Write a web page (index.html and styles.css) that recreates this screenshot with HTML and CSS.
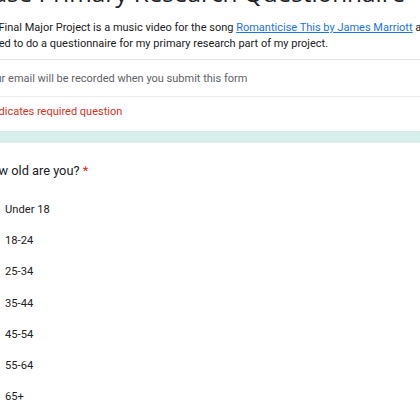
FILE: index.html
```html
<!DOCTYPE html>
<html lang="en">
<head>
<meta charset="utf-8">
<title>Primary Research Questionnaire</title>
<link rel="stylesheet" href="styles.css">
</head>
<body>
<div class="form">
  <section class="card header-card">
    <h1 class="title">Phase Primary Research Questionnaire</h1>
    <p class="desc">My Final Major Project is a music video for the song <a href="#">Romanticise This by James Marriott</a> and<br>I need to do a questionnaire for my primary research part of my project.</p>
    <div class="row email">Your email will be recorded when you submit this form</div>
    <div class="row required">* Indicates required question</div>
  </section>
  <div class="gap"></div>
  <section class="card question-card">
    <div class="question">How old are you? <span class="star">*</span></div>
    <ul class="options">
      <li>Under 18</li>
      <li>18-24</li>
      <li>25-34</li>
      <li>35-44</li>
      <li>45-54</li>
      <li>55-64</li>
      <li>65+</li>
    </ul>
  </section>
</div>
</body>
</html>
```
FILE: styles.css
```css
html, body {
  margin: 0;
  padding: 0;
  overflow: hidden;
  background: #ffffff;
}
body {
  font-family: Roboto, "Liberation Sans", sans-serif;
  color: #202124;
}
.form {
  width: 700px;
}
.card {
  background: #fff;
}
.header-card {
  margin-top: -23px;
}
.title {
  margin: 0 0 0 -36px;
  font-family: "Open Sans", Roboto, sans-serif;
  font-weight: 500;
  font-size: 24.3px;
  line-height: 32px;
  white-space: nowrap;
  color: #202124;
}
.desc {
  margin: 11px 0 0 -19px;
  font-size: 11px;
  line-height: 16px;
  white-space: nowrap;
  color: #202124;
}
.desc a {
  color: #1a73e8;
  text-decoration: underline;
}
.row {
  font-size: 11px;
  line-height: 16px;
  white-space: nowrap;
}
.email {
  margin-top: 7px;
  border-top: 1px solid #e3e3e3;
  text-indent: -17px;
  color: #5f6368;
  padding: 11px 0 9px 0;
}
.required {
  border-top: 1px solid #ececec;
  color: #d93025;
  text-indent: -18px;
  padding: 7px 0 11px 0;
}
.gap {
  height: 10px;
  background: #d6efed;
  border-top: 1px solid #dde7e6;
  border-bottom: 1px solid #e6ecec;
}
.question-card {
  padding-top: 19px;
}
.question {
  font-size: 12.8px;
  line-height: 18px;
  text-indent: -18px;
  white-space: nowrap;
}
.star {
  color: #d93025;
}
.options {
  list-style: none;
  margin: 22px 0 0 0;
  padding: 0 0 0 5px;
}
.options li {
  font-size: 11.2px;
  line-height: 16px;
  padding: 0 0 15.2px 0;
}
```
